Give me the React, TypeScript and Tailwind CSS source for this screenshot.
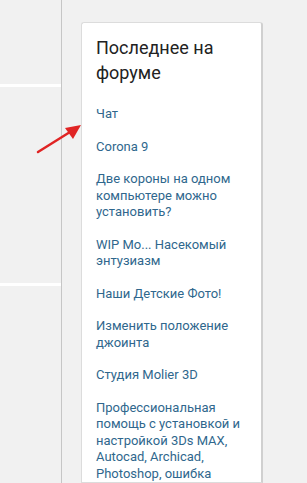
import React from "react";

const links = [
  "Чат",
  "Corona 9",
  "Две короны на одном компьютере можно установить?",
  "WIP Mo... Насекомый энтузиазм",
  "Наши Детские Фото!",
  "Изменить положение джоинта",
  "Студия Molier 3D",
  "Профессиональная помощь с установкой и настройкой 3Ds MAX, Autocad, Archicad, Photoshop, ошибка",
];

const App = () => {
  return (
    <div
      className="relative flex h-[483px] w-[307px] overflow-hidden bg-[#f1f1f1]"
      style={{ fontFamily: "Roboto, 'Liberation Sans', sans-serif" }}
    >
      {/* left strip */}
      <div className="w-[61px] flex-shrink-0 pt-[84px]">
        <div className="h-[3px] bg-white" />
        <div className="mt-[196px] h-[3px] bg-white" />
      </div>
      <div className="w-px flex-shrink-0 bg-[#c6c6c6]" />

      {/* forum card */}
      <div className="ml-[19px] mt-[22px] w-[182px] flex-shrink-0 rounded-t-[3px] border border-r-2 border-[#dcdcdc] border-r-[#d0d0d0] bg-white px-[14px] pt-[12px]">
        <h3 className="text-[18px] leading-[25px] text-[#222]">Последнее на форуме</h3>
        <ul className="mt-[21px] flex flex-col gap-[16px]">
          {links.map((t) => (
            <li key={t} className="text-[13px] leading-[16.5px] text-[#2f678d]">
              {t}
            </li>
          ))}
        </ul>
      </div>

      {/* red arrow */}
      <svg className="absolute left-0 top-0" width="307" height="483" viewBox="0 0 307 483">
        <line x1="38" y1="152" x2="70" y2="132" stroke="#e02424" strokeWidth="2.5" strokeLinecap="round" />
        <polygon points="81,125 65,128 73,139" fill="#e02424" />
      </svg>
    </div>
  );
};

export default App;
